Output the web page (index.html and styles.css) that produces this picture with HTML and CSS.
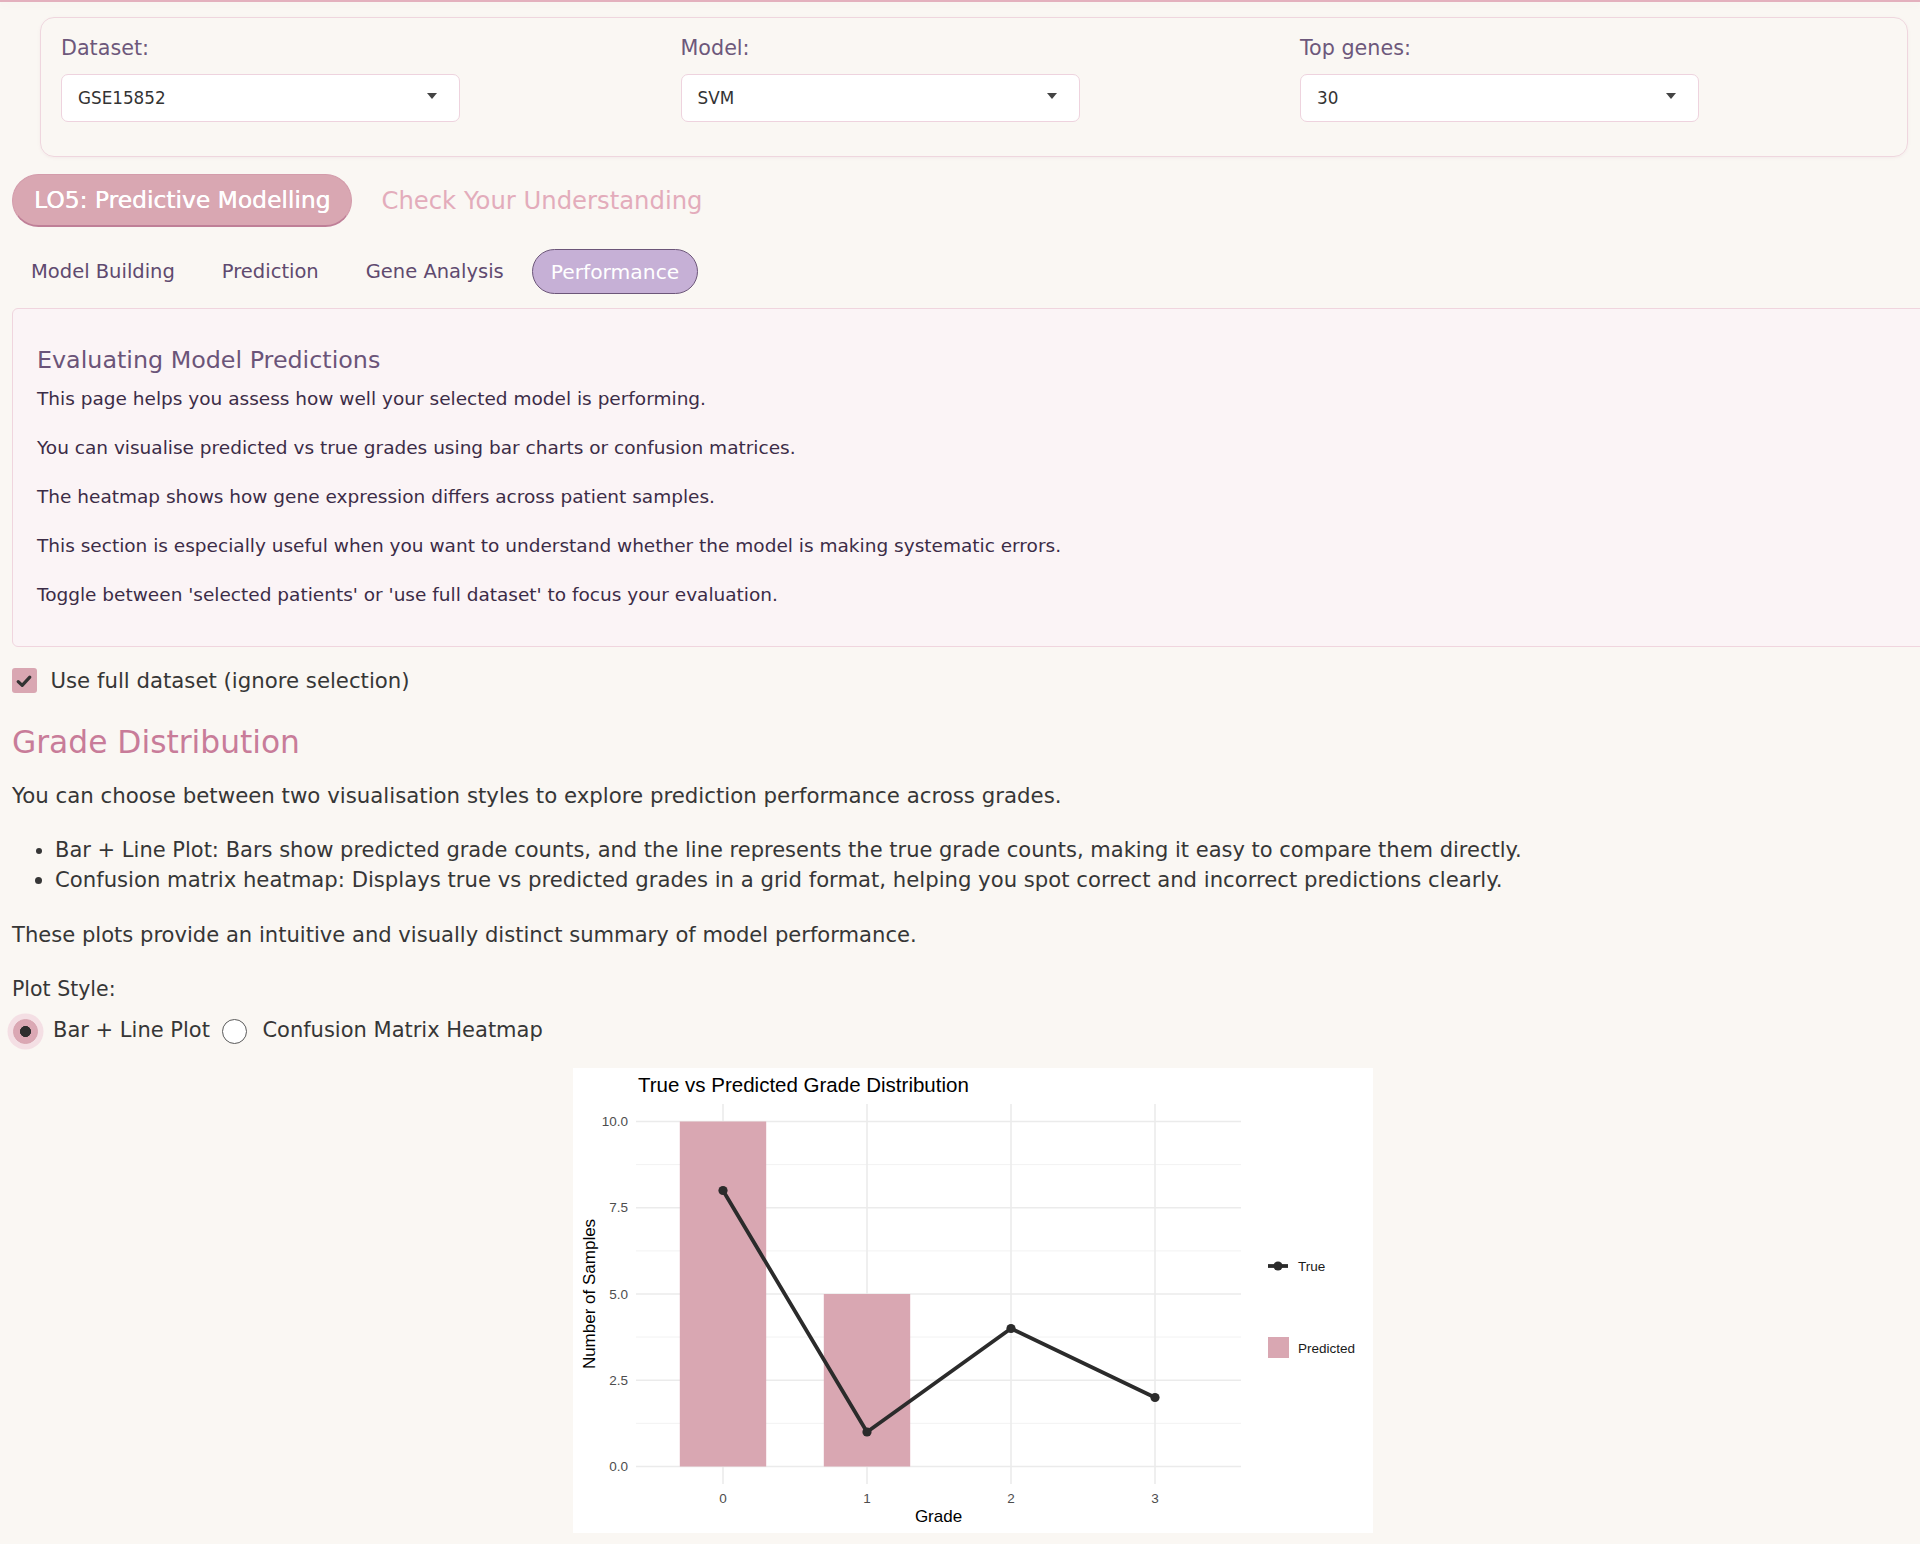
FILE: index.html
```html
<!DOCTYPE html>
<html lang="en">
<head>
<meta charset="utf-8">
<title>LO5: Predictive Modelling</title>
<link rel="stylesheet" href="styles.css">
</head>
<body>
<div class="topline"></div>
<main class="page">
  <section class="filters">
    <div class="field">
      <label class="field-label">Dataset:</label>
      <div class="select"><span>GSE15852</span><i class="caret"></i></div>
    </div>
    <div class="field">
      <label class="field-label">Model:</label>
      <div class="select"><span>SVM</span><i class="caret"></i></div>
    </div>
    <div class="field">
      <label class="field-label">Top genes:</label>
      <div class="select"><span>30</span><i class="caret"></i></div>
    </div>
  </section>

  <nav class="main-tabs">
    <a class="main-tab active">LO5: Predictive Modelling</a>
    <a class="main-tab">Check Your Understanding</a>
  </nav>

  <nav class="sub-tabs">
    <a class="sub-tab">Model Building</a>
    <a class="sub-tab">Prediction</a>
    <a class="sub-tab">Gene Analysis</a>
    <a class="sub-tab active">Performance</a>
  </nav>

  <section class="info">
    <h3 class="info-title">Evaluating Model Predictions</h3>
    <p>This page helps you assess how well your selected model is performing.</p>
    <p>You can visualise predicted vs true grades using bar charts or confusion matrices.</p>
    <p>The heatmap shows how gene expression differs across patient samples.</p>
    <p>This section is especially useful when you want to understand whether the model is making systematic errors.</p>
    <p>Toggle between 'selected patients' or 'use full dataset' to focus your evaluation.</p>
  </section>

  <label class="check">
    <span class="check-box"><svg width="24" height="24" viewBox="0 0 24 24"><path d="M6.2 12.6 L10.2 16.4 L17.8 8.2" fill="none" stroke="#333" stroke-width="3.2" stroke-linecap="round" stroke-linejoin="round"/></svg></span>
    <span>Use full dataset (ignore selection)</span>
  </label>

  <h2 class="section-title">Grade Distribution</h2>
  <p class="body-p">You can choose between two visualisation styles to explore prediction performance across grades.</p>
  <ul class="body-list">
    <li>Bar + Line Plot: Bars show predicted grade counts, and the line represents the true grade counts, making it easy to compare them directly.</li>
    <li>Confusion matrix heatmap: Displays true vs predicted grades in a grid format, helping you spot correct and incorrect predictions clearly.</li>
  </ul>
  <p class="body-p last">These plots provide an intuitive and visually distinct summary of model performance.</p>

  <div class="radio-group">
    <div class="radio-title">Plot Style:</div>
    <div class="radios">
      <label class="radio"><span class="radio-dot checked"></span><span>Bar + Line Plot</span></label>
      <label class="radio"><span class="radio-dot"></span><span>Confusion Matrix Heatmap</span></label>
    </div>
  </div>

  <div class="chart">
    <svg width="800" height="465" viewBox="0 0 800 465">
      <rect width="800" height="465" fill="#ffffff"/>
      <g class="grid-minor">
        <line x1="63" x2="668" y1="96.6" y2="96.6"/>
        <line x1="63" x2="668" y1="182.9" y2="182.9"/>
        <line x1="63" x2="668" y1="269.1" y2="269.1"/>
        <line x1="63" x2="668" y1="355.4" y2="355.4"/>
      </g>
      <g class="grid-major">
        <line x1="63" x2="668" y1="53.5" y2="53.5"/>
        <line x1="63" x2="668" y1="139.75" y2="139.75"/>
        <line x1="63" x2="668" y1="226" y2="226"/>
        <line x1="63" x2="668" y1="312.25" y2="312.25"/>
        <line x1="63" x2="668" y1="398.5" y2="398.5"/>
        <line x1="150" x2="150" y1="36" y2="416"/>
        <line x1="294" x2="294" y1="36" y2="416"/>
        <line x1="438" x2="438" y1="36" y2="416"/>
        <line x1="582" x2="582" y1="36" y2="416"/>
      </g>
      <rect x="106.8" y="53.5" width="86.4" height="345" fill="#d9a7b2"/>
      <rect x="250.8" y="226" width="86.4" height="172.5" fill="#d9a7b2"/>
      <polyline points="150,122.5 294,364 438,260.5 582,329.5" fill="none" stroke="#2b2b2b" stroke-width="3.8" stroke-linejoin="round"/>
      <g fill="#2b2b2b">
        <circle cx="150" cy="122.5" r="4.6"/>
        <circle cx="294" cy="364" r="4.6"/>
        <circle cx="438" cy="260.5" r="4.6"/>
        <circle cx="582" cy="329.5" r="4.6"/>
      </g>
      <text class="plot-title" x="65" y="24">True vs Predicted Grade Distribution</text>
      <g class="tick" text-anchor="end">
        <text x="55" y="58">10.0</text>
        <text x="55" y="144.3">7.5</text>
        <text x="55" y="230.5">5.0</text>
        <text x="55" y="316.8">2.5</text>
        <text x="55" y="403">0.0</text>
      </g>
      <g class="tick" text-anchor="middle">
        <text x="150" y="435">0</text>
        <text x="294" y="435">1</text>
        <text x="438" y="435">2</text>
        <text x="582" y="435">3</text>
      </g>
      <text class="axis-title" x="365.5" y="454" text-anchor="middle">Grade</text>
      <text class="axis-title" transform="translate(22,226) rotate(-90)" text-anchor="middle">Number of Samples</text>
      <line x1="695" x2="715" y1="198" y2="198" stroke="#2b2b2b" stroke-width="3.8"/>
      <circle cx="705" cy="198" r="4.6" fill="#2b2b2b"/>
      <text class="legend" x="725" y="203">True</text>
      <rect x="695" y="269" width="21" height="21" fill="#d9a7b2"/>
      <text class="legend" x="725" y="284.5">Predicted</text>
    </svg>
  </div>
</main>
</body>
</html>
```

FILE: styles.css
```css
html {
  overflow: hidden;
}
body {
  margin: 0;
  background: #faf7f3;
  font-family: "DejaVu Sans", "Noto Sans", sans-serif;
  color: #363636;
}
.topline {
  height: 2px;
  background: #e3b0bd;
  box-shadow: 0 2px 8px rgba(120, 80, 90, 0.07);
}
.page {
  width: 1922px;
  padding-left: 12px;
}

/* Filters */
.filters {
  margin: 15px 26px 0 28px;
  border: 1px solid #efd6de;
  border-radius: 14px;
  padding: 15.2px 20px 34.5px 20px;
  display: grid;
  grid-template-columns: repeat(3, 1fr);
  column-gap: 32.5px;
  box-shadow: 0 1px 3px rgba(200, 160, 170, 0.12);
}
.field {
  display: flex;
  flex-direction: column;
}
.field-label {
  font-size: 20.7px;
  line-height: 30px;
  color: #6d587b;
  margin-bottom: 10.8px;
}
.select {
  width: 399px;
  height: 48px;
  box-sizing: border-box;
  background: #ffffff;
  border: 1px solid #eed3de;
  border-radius: 7px;
  display: flex;
  align-items: center;
  justify-content: space-between;
  padding: 1px 22px 0 16px;
  font-size: 16.8px;
  color: #333333;
}
.caret {
  width: 0;
  height: 0;
  border-left: 5.5px solid transparent;
  border-right: 5.5px solid transparent;
  border-top: 6px solid #444;
  margin-top: -4px;
}

/* Main tabs */
.main-tabs {
  display: flex;
  align-items: center;
  gap: 7px;
  margin-top: 17px;
}
.main-tab {
  height: 53px;
  box-sizing: border-box;
  display: flex;
  align-items: center;
  padding: 0 22px;
  font-size: 24.3px;
  color: #e3acbb;
  border-radius: 27px;
}
.main-tab.active {
  background: #d9a7b2;
  color: #ffffff;
  border: 1px solid #d39cab;
  border-bottom: 2px solid #bf7f97;
  padding: 0 21px;
  font-size: 23.4px;
  text-shadow: 0.3px 0 0 #ffffff;
}

/* Sub tabs */
.sub-tabs {
  display: flex;
  gap: 9px;
  margin-top: 22px;
}
.sub-tab {
  height: 45px;
  box-sizing: border-box;
  display: flex;
  align-items: center;
  padding: 0 18px;
  border: 1px solid transparent;
  border-radius: 23px;
  font-size: 19.5px;
  color: #5f4a6f;
}
.sub-tab.active {
  background: #c6b0d6;
  border-color: #6c5679;
  color: #ffffff;
  font-size: 20.3px;
}

/* Info box */
.info {
  margin-top: 14px;
  background: #fbf4f6;
  border: 1px solid #f0d5de;
  border-radius: 6px;
  padding: 36.8px 24px 16.2px 24px;
}
.info-title {
  margin: 0 0 10.7px 0;
  font-size: 23.8px;
  line-height: 28.2px;
  font-weight: normal;
  color: #6b5479;
}
.info p {
  margin: 0 0 21.25px 0;
  font-size: 18.5px;
  line-height: 27.75px;
  color: #3c2c47;
}

/* Checkbox */
.check {
  display: flex;
  align-items: center;
  gap: 14px;
  margin-top: 18.5px;
  font-size: 21.25px;
  line-height: 30.5px;
  color: #363636;
}
.check-box {
  width: 24.5px;
  height: 24.5px;
  border-radius: 3px;
  background: #d9a7b2;
  display: flex;
  align-items: center;
  justify-content: center;
  margin-top: -1px;
}

/* Section */
.section-title {
  margin: 27.7px 0 0 0;
  font-size: 31.3px;
  line-height: 37.2px;
  font-weight: normal;
  color: #c87c99;
}
.body-p {
  margin: 19.6px 0 0 0;
  font-size: 21.3px;
  line-height: 30.5px;
}
.body-p.last {
  font-size: 21.1px;
}
.body-list {
  margin: 23.5px 0 0 0;
  padding-left: 43px;
  font-size: 21px;
  line-height: 30.5px;
}
.body-list li:last-child {
  font-size: 21.2px;
}
.body-list + .body-p {
  margin-top: 24px;
}

/* Radio */
.radio-group {
  margin-top: 23.5px;
}
.radio-title {
  font-size: 20.5px;
  line-height: 30.5px;
}
.radios {
  display: flex;
  align-items: center;
  margin-top: 10.5px;
  font-size: 21px;
  line-height: 30.5px;
}
.radio {
  display: flex;
  align-items: center;
  gap: 15.5px;
  margin-right: 11.5px;
}
.radio-dot {
  width: 25px;
  height: 25px;
  box-sizing: border-box;
  border-radius: 50%;
  border: 1px solid #5a5a5a;
  background: #ffffff;
  margin-top: 2px;
  margin-left: 0.5px;
}
.radio-dot.checked {
  border: 1px solid #d9a7b2;
  background: #dba8b4 radial-gradient(circle, #2e2e2e 0 5.3px, transparent 5.8px);
  box-shadow: 0 0 0 5.5px #f4dfe4;
}

/* Chart */
.chart {
  width: 800px;
  height: 465px;
  margin: 23px auto 0 auto;
}
.chart svg {
  display: block;
}
.chart text {
  font-family: "Liberation Sans", Arial, sans-serif;
}
.grid-minor line {
  stroke: #f0f0f0;
  stroke-width: 0.9;
}
.grid-major line {
  stroke: #ebebeb;
  stroke-width: 1.6;
}
.plot-title {
  font-size: 20.5px;
  fill: #000000;
}
.tick text {
  font-size: 13.5px;
  fill: #4d4d4d;
}
.axis-title {
  font-size: 17px;
  fill: #000000;
}
.legend {
  font-size: 13.5px;
  fill: #1a1a1a;
}
```
